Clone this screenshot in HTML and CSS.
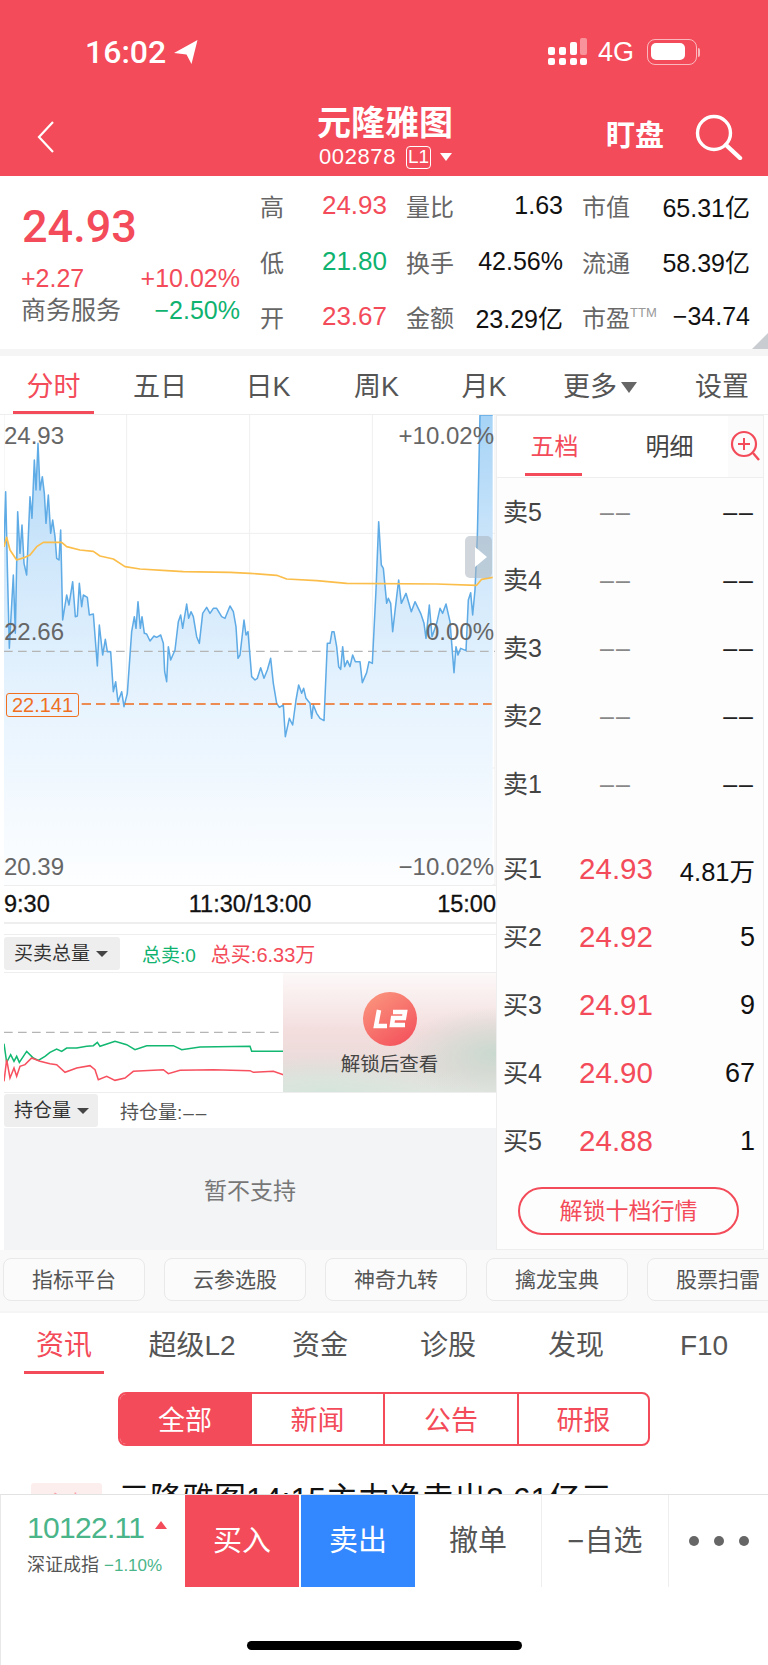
FILE: index.html
```html
<!DOCTYPE html>
<html lang="zh-CN">
<head>
    <meta charset="UTF-8">
    <meta name="viewport" content="width=device-width, initial-scale=1.0">
    <title>元隆雅图 002878</title>
    <link rel="stylesheet" href="styles.css">
</head>
<body>
<div class="page">
    <header class="header">
        <div class="status">
            <span class="clock">16:02</span>
            <svg class="loc" width="24" height="24" viewBox="0 0 24 24"><path d="M23.5 0 L0 13 L12.5 14.5 L17.5 24 Z" fill="#fff"/></svg>
            <span class="status-right">
                <svg class="signal" width="39" height="27" viewBox="0 0 39 27">
                    <g fill="#fff">
                        <rect x="0" y="20" width="7" height="7" rx="2"/><rect x="11" y="20" width="7" height="7" rx="2"/><rect x="22" y="20" width="7" height="7" rx="2"/><rect x="32" y="20" width="7" height="7" rx="2"/>
                        <rect x="0" y="9" width="7" height="8" rx="2"/><rect x="11" y="9" width="7" height="8" rx="2"/><rect x="22" y="4" width="7" height="13" rx="2"/>
                        <rect x="32" y="0" width="7" height="17" rx="2" opacity=".4"/>
                    </g>
                </svg>
                <span class="net">4G</span>
                <span class="battery"><span class="battery-fill"></span></span>
                <span class="battery-tip"></span>
            </span>
        </div>
        <div class="nav">
            <svg class="back" width="18" height="32" viewBox="0 0 18 32"><path d="M16 1 L2 16 L16 31" fill="none" stroke="#fff" stroke-width="2.2"/></svg>
            <div class="title">
                <div class="name">元隆雅图</div>
                <div class="code">002878<span class="level">L1</span><span class="caret-white"></span></div>
            </div>
            <span class="watch">盯盘</span>
            <svg class="search" width="48" height="46" viewBox="0 0 48 46"><circle cx="19" cy="19" r="16.5" fill="none" stroke="#fff" stroke-width="3.4"/><path d="M31 31 L45 44" stroke="#fff" stroke-width="4.4" stroke-linecap="round"/></svg>
        </div>
    </header>

    <section class="quote">
        <div class="quote-left">
            <div class="price">24.93</div>
            <div class="quote-line"><span class="red">+2.27</span><span class="red">+10.02%</span></div>
            <div class="quote-line line-two"><span class="muted">商务服务</span><span class="green">−2.50%</span></div>
        </div>
        <div class="stats">
            <div class="stat"><span class="muted">高</span><span class="red">24.93</span></div>
            <div class="stat"><span class="muted">量比</span><span>1.63</span></div>
            <div class="stat"><span class="muted">市值</span><span>65.31亿</span></div>
            <div class="stat"><span class="muted">低</span><span class="green">21.80</span></div>
            <div class="stat"><span class="muted">换手</span><span>42.56%</span></div>
            <div class="stat"><span class="muted">流通</span><span>58.39亿</span></div>
            <div class="stat"><span class="muted">开</span><span class="red">23.67</span></div>
            <div class="stat"><span class="muted">金额</span><span>23.29亿</span></div>
            <div class="stat"><span class="muted">市盈<sup class="ttm">TTM</sup></span><span>−34.74</span></div>
        </div>
        <span class="corner"></span>
    </section>

    <nav class="chart-tabs">
        <span class="chart-tab active">分时</span>
        <span class="chart-tab">五日</span>
        <span class="chart-tab">日K</span>
        <span class="chart-tab">周K</span>
        <span class="chart-tab">月K</span>
        <span class="chart-tab more-tab">更多<i class="caret-gray"></i></span>
        <span class="chart-tab last">设置</span>
    </nav>

    <div class="main">
        <div class="left">
            <div class="chart">
                <svg width="492" height="470" viewBox="12 195 1476 1410">
                    <defs>
                        <linearGradient id="area" x1="0" y1="0" x2="0" y2="1">
                            <stop offset="0" stop-color="#a6d3f6"/>
                            <stop offset=".3" stop-color="#cfe7fb"/>
                            <stop offset=".6" stop-color="#e6f3fe"/>
                            <stop offset="1" stop-color="#fdfeff"/>
                        </linearGradient>
                    </defs>
                    <g stroke="#efefef" stroke-width="3" fill="none">
                        <path d="M12 195 V1605 M380 195 V1605 M749 195 V1605 M1117 195 V1605 M1485 195 V1605"/>
                        <path d="M12 550 H1485 M12 1254 H1485 M12 1603 H1485"/>
                    </g>
                    <polygon fill="url(#area)" points="12,590 17,425 22,650 28,895 33,800 40,675 46,850 53,485 60,610 66,525 72,640 80,675 90,440 96,505 103,330 108,420 114,280 120,420 127,380 133,430 138,520 145,435 152,550 158,510 165,560 170,625 177,630 182,540 188,810 200,735 207,765 218,695 226,800 232,798 238,700 245,770 250,735 262,742 268,795 280,792 292,948 298,825 308,915 316,868 322,905 332,905 340,1025 347,995 354,1055 365,1025 372,1070 382,1030 395,845 403,800 408,835 414,755 421,835 426,800 433,850 440,852 450,873 462,858 470,862 482,855 490,880 494,965 500,995 505,890 512,930 525,900 535,815 542,795 548,835 560,762 566,805 573,785 580,800 590,860 598,880 608,790 620,772 630,790 640,775 650,775 665,800 675,805 690,768 700,785 708,830 714,925 720,915 732,810 738,855 744,845 755,980 765,990 772,985 782,953 792,985 802,960 812,925 820,1000 830,1060 838,1072 850,1065 856,1160 868,1105 878,1125 888,1050 896,1005 905,1030 911,1015 918,1045 930,1060 935,1105 940,1065 950,1090 960,1105 972,1112 982,880 990,880 996,845 1002,845 1010,890 1016,950 1022,958 1028,890 1034,950 1042,932 1050,950 1058,915 1066,935 1080,935 1087,998 1100,968 1107,935 1117,940 1128,720 1136,515 1144,645 1150,655 1160,760 1165,745 1172,760 1178,845 1190,740 1196,690 1204,760 1218,730 1234,785 1245,755 1262,790 1272,820 1278,865 1288,765 1296,860 1310,820 1320,775 1328,790 1338,762 1350,815 1362,968 1368,890 1374,915 1382,895 1398,902 1405,750 1412,728 1418,795 1425,720 1432,560 1440,195 1478,195 1478,1605 12,1605"/>
                    <path d="M12 904 H1485" stroke="#b5b5b5" stroke-width="3.4" stroke-dasharray="26 16" fill="none"/>
                    <polyline fill="none" stroke="#5fabe6" stroke-width="4.6" stroke-linejoin="round" points="12,590 17,425 22,650 28,895 33,800 40,675 46,850 53,485 60,610 66,525 72,640 80,675 90,440 96,505 103,330 108,420 114,280 120,420 127,380 133,430 138,520 145,435 152,550 158,510 165,560 170,625 177,630 182,540 188,810 200,735 207,765 218,695 226,800 232,798 238,700 245,770 250,735 262,742 268,795 280,792 292,948 298,825 308,915 316,868 322,905 332,905 340,1025 347,995 354,1055 365,1025 372,1070 382,1030 395,845 403,800 408,835 414,755 421,835 426,800 433,850 440,852 450,873 462,858 470,862 482,855 490,880 494,965 500,995 505,890 512,930 525,900 535,815 542,795 548,835 560,762 566,805 573,785 580,800 590,860 598,880 608,790 620,772 630,790 640,775 650,775 665,800 675,805 690,768 700,785 708,830 714,925 720,915 732,810 738,855 744,845 755,980 765,990 772,985 782,953 792,985 802,960 812,925 820,1000 830,1060 838,1072 850,1065 856,1160 868,1105 878,1125 888,1050 896,1005 905,1030 911,1015 918,1045 930,1060 935,1105 940,1065 950,1090 960,1105 972,1112 982,880 990,880 996,845 1002,845 1010,890 1016,950 1022,958 1028,890 1034,950 1042,932 1050,950 1058,915 1066,935 1080,935 1087,998 1100,968 1107,935 1117,940 1128,720 1136,515 1144,645 1150,655 1160,760 1165,745 1172,760 1178,845 1190,740 1196,690 1204,760 1218,730 1234,785 1245,755 1262,790 1272,820 1278,865 1288,765 1296,860 1310,820 1320,775 1328,790 1338,762 1350,815 1362,968 1368,890 1374,915 1382,895 1398,902 1405,750 1412,728 1418,795 1425,720 1432,560 1440,195 1478,195"/>
                    <path d="M245 1062 H1475" stroke="#ee6a1a" stroke-width="4.4" stroke-dasharray="28 15" fill="none"/>
                    <polyline fill="none" stroke="#fbbe4b" stroke-width="5" stroke-linejoin="round" points="12,590 20,562 30,600 50,630 75,622 90,615 110,590 130,577 185,577 200,590 240,600 280,604 300,618 340,627 375,650 420,657 500,662 550,665 690,667 750,670 830,676 860,687 950,692 1040,700 1310,702 1430,706 1445,688 1478,682"/>
                </svg>
                <span class="lbl lbl-tl">24.93</span>
                <span class="lbl lbl-tr">+10.02%</span>
                <span class="lbl lbl-ml">22.66</span>
                <span class="lbl lbl-mr">0.00%</span>
                <span class="lbl lbl-bl">20.39</span>
                <span class="lbl lbl-br">−10.02%</span>
                <span class="cost">22.141</span>
                <span class="handle"><i class="handle-arrow"></i></span>
            </div>
            <div class="axis"><span>9:30</span><span>11:30/13:00</span><span class="axis-end">15:00</span></div>
            <div class="sub-head sub-first">
                <span class="pick pick-wide">买卖总量<i class="caret-dark"></i></span>
                <span class="green sell-total">总卖:0</span>
                <span class="red">总买:6.33万</span>
            </div>
            <div class="mini">
                <svg width="492" height="119" viewBox="12 700 1476 357">
                    <path d="M12 878 H850" stroke="#b5b5b5" stroke-width="3.4" stroke-dasharray="26 16" fill="none"/>
                    <polyline fill="none" stroke="#12b871" stroke-width="4.6" points="12,912 20,968 32,945 42,965 50,950 58,968 80,935 100,955 115,962 135,950 150,938 170,928 185,935 200,925 230,925 260,920 280,918 292,908 300,920 345,905 380,915 405,930 440,918 520,918 545,930 600,922 750,920 755,935 850,935"/>
                    <polyline fill="none" stroke="#f7505f" stroke-width="4.6" points="12,1025 20,960 30,1015 42,985 50,1010 60,980 75,975 95,955 120,965 150,972 170,975 195,998 230,985 270,978 285,990 295,1020 320,1010 345,1022 375,1015 400,995 490,990 505,1002 540,992 640,990 750,993 760,998 820,995 850,1005"/>
                </svg>
                <div class="locked">
                    <span class="l2"><svg width="36" height="22" viewBox="0 0 36 22"><g fill="none" stroke="#fff" stroke-width="4.5"><path d="M7 2 L4 18 H15"/><path d="M21 4 H33 L32 10 H21 L20 17 H33"/></g></svg></span>
                    <span class="locked-text">解锁后查看</span>
                </div>
            </div>
            <div class="sub-head sub-second">
                <span class="pick">持仓量<i class="caret-dark"></i></span>
                <span class="hold">持仓量:<span class="short">––</span></span>
            </div>
            <div class="empty">暂不支持</div>
        </div>

        <aside class="panel">
            <div class="panel-tabs">
                <span class="panel-tab active">五档</span>
                <span class="panel-tab">明细</span>
                <span class="panel-zoom">
                    <svg width="30" height="32" viewBox="0 0 30 32"><circle cx="14" cy="14" r="12" fill="none" stroke="#f34b59" stroke-width="2.2"/><path d="M14 8 V20 M8 14 H20" stroke="#f34b59" stroke-width="2"/><path d="M23 23 L29 30" stroke="#f34b59" stroke-width="2.4"/></svg>
                </span>
            </div>
            <div class="book">
                <div class="row"><span class="side">卖5</span><span class="dash">––</span><span class="dash-dark">––</span></div>
                <div class="row"><span class="side">卖4</span><span class="dash">––</span><span class="dash-dark">––</span></div>
                <div class="row"><span class="side">卖3</span><span class="dash">––</span><span class="dash-dark">––</span></div>
                <div class="row"><span class="side">卖2</span><span class="dash">––</span><span class="dash-dark">––</span></div>
                <div class="row"><span class="side">卖1</span><span class="dash">––</span><span class="dash-dark">––</span></div>
            </div>
            <div class="book book-buy">
                <div class="row"><span class="side">买1</span><span class="bid">24.93</span><span class="vol vol-small">4.81万</span></div>
                <div class="row"><span class="side">买2</span><span class="bid">24.92</span><span class="vol">5</span></div>
                <div class="row"><span class="side">买3</span><span class="bid">24.91</span><span class="vol">9</span></div>
                <div class="row"><span class="side">买4</span><span class="bid">24.90</span><span class="vol">67</span></div>
                <div class="row"><span class="side">买5</span><span class="bid">24.88</span><span class="vol">1</span></div>
            </div>
            <div class="unlock">解锁十档行情</div>
        </aside>
    </div>

    <div class="shortcuts">
        <span class="shortcut">指标平台</span>
        <span class="shortcut">云参选股</span>
        <span class="shortcut">神奇九转</span>
        <span class="shortcut">擒龙宝典</span>
        <span class="shortcut">股票扫雷</span>
    </div>

    <section class="news">
        <div class="news-tabs">
            <span class="news-tab active">资讯</span>
            <span class="news-tab">超级L2</span>
            <span class="news-tab">资金</span>
            <span class="news-tab">诊股</span>
            <span class="news-tab">发现</span>
            <span class="news-tab">F10</span>
        </div>
        <div class="segments">
            <span class="segment on">全部</span>
            <span class="segment">新闻</span>
            <span class="segment">公告</span>
            <span class="segment">研报</span>
        </div>
        <div class="news-item">
            <span class="news-tag">主力</span>
            <span class="news-title">元隆雅图14:15主力净卖出2.61亿元</span>
        </div>
    </section>

    <footer class="bar">
        <div class="bar-row">
            <div class="index">
                <div class="index-top"><span class="index-val">10122.11</span><i class="index-up"></i></div>
                <div class="index-sub">深证成指 <span class="index-pct">−1.10%</span></div>
            </div>
            <span class="action buy">买入</span>
            <span class="action sell">卖出</span>
            <span class="action cancel">撤单</span>
            <span class="action fav">−自选</span>
            <span class="action more"><i></i><i></i><i></i></span>
        </div>
        <div class="home"></div>
    </footer>
</div>
</body>
</html>
```

FILE: styles.css
```css
* {
    box-sizing: border-box;
}

body {
    margin: 0;
    font-family: "Liberation Sans", "Noto Sans CJK SC", sans-serif;
    color: #111;
    background-color: #fff;
}

i {
    font-style: normal;
}

.page {
    width: 768px;
    height: 1665px;
    overflow: hidden;
    display: flex;
    flex-direction: column;
    background-color: #f5f5f5;
}

.red { color: #f34b59; }
.green { color: #0fb26f; }
.muted { color: #666; }

/* header */
.header {
    height: 176px;
    flex: none;
    background-color: #f34b59;
    color: #fff;
}

.status {
    height: 92px;
    padding: 34px 68px 0 85px;
    display: flex;
    align-items: flex-start;
}

.clock {
    font-size: 32px;
    line-height: 36px;
    font-family: Roboto, "Liberation Sans", sans-serif;
    font-weight: 500;
}

.loc {
    margin: 6px 0 0 8px;
}

.status-right {
    margin-left: auto;
    display: flex;
    align-items: center;
    height: 36px;
}

.signal {
    margin-top: -1px;
}

.net {
    font-size: 27px;
    margin-left: 11px;
    width: 49px;
}

.battery {
    width: 50px;
    height: 26px;
    border: 1.5px solid rgba(255, 255, 255, .6);
    border-radius: 8px;
    padding: 3px;
    display: block;
}

.battery-fill {
    display: block;
    width: 34px;
    height: 17px;
    background-color: #fff;
    border-radius: 5px;
}

.battery-tip {
    width: 2px;
    height: 9px;
    margin-left: 1px;
    background-color: rgba(255, 255, 255, .6);
    border-radius: 0 2px 2px 0;
}

.nav {
    height: 84px;
    display: flex;
    align-items: flex-start;
}

.back {
    margin: 29px 0 0 37px;
}

.title {
    width: 135px;
    margin: 12px 0 0 262px;
}

.name {
    font-size: 34px;
    line-height: 38px;
    font-weight: bold;
    white-space: nowrap;
}

.code {
    margin-top: 3px;
    padding-left: 2px;
    font-size: 22px;
    line-height: 24px;
    letter-spacing: .6px;
    white-space: nowrap;
    display: flex;
    align-items: center;
}

.level {
    width: 26px;
    height: 23px;
    margin-left: 10px;
    border: 1.5px solid #fff;
    border-radius: 4px;
    font-size: 19px;
    line-height: 20px;
    letter-spacing: 0;
    text-align: center;
}

.caret-white {
    margin-left: 9px;
    border: 6px solid transparent;
    border-top: 8px solid #fff;
    border-bottom: 0;
}

.watch {
    margin: 27px 0 0 154px;
    font-size: 29px;
    line-height: 34px;
    font-weight: bold;
    white-space: nowrap;
}

.search {
    margin: 22px 0 0 31px;
}

/* quote */
.quote {
    height: 173px;
    flex: none;
    background-color: #fff;
    display: flex;
    position: relative;
}

.quote-left {
    width: 219px;
    margin-left: 21px;
    margin-right: 20px;
}

.price {
    font-family: Roboto, "Liberation Sans", sans-serif;
    font-weight: 500;
    font-size: 45px;
    line-height: 50px;
    color: #f34b59;
    margin: 26px 0 0 1px;
}

.quote-line {
    display: flex;
    justify-content: space-between;
    font-size: 25px;
    line-height: 30px;
    margin-top: 11px;
    white-space: nowrap;
}

.line-two {
    margin-top: 2px;
}

.stats {
    padding-top: 2px;
    display: grid;
    grid-template-columns: 127px 157px 168px;
    grid-auto-rows: 55.5px;
    column-gap: 19px;
    font-size: 25px;
}

.stat {
    display: flex;
    justify-content: space-between;
    align-items: center;
    white-space: nowrap;
}

.stat .red,
.stat .green {
    font-size: 26px;
}

.stat .muted {
    font-size: 24px;
}

.ttm {
    font-size: 13px;
    line-height: 0;
    vertical-align: 10px;
    color: #999;
}

.corner {
    position: absolute;
    right: 0;
    bottom: 0;
    width: 16px;
    height: 16px;
    background-color: #c9ccd0;
    clip-path: polygon(100% 0, 100% 100%, 0 100%);
}

/* chart tabs */
.chart-tabs {
    height: 59px;
    flex: none;
    margin-top: 7px;
    background-color: #fff;
    border-bottom: 1px solid #eee;
    display: grid;
    grid-template-columns: 107px 106px 110px 107px 108px 108px 1fr;
    font-size: 27px;
    color: #555;
}

.chart-tab {
    text-align: center;
    line-height: 62px;
    height: 58px;
    white-space: nowrap;
}

.chart-tab.active {
    color: #f34b59;
    position: relative;
}

.chart-tab.active::after {
    content: "";
    position: absolute;
    left: 13px;
    right: 13px;
    bottom: 0;
    height: 3px;
    background-color: #f34b59;
}

.chart-tab.more-tab {
    text-align: left;
    padding-left: 25px;
}

.chart-tab.last {
    text-align: right;
    padding-right: 19px;
}

.caret-gray {
    display: inline-block;
    vertical-align: 3px;
    margin-left: 4px;
    border: 8px solid transparent;
    border-top: 11px solid #666;
    border-bottom: 0;
}

/* main split */
.main {
    height: 835px;
    flex: none;
    display: flex;
    background-color: #fff;
}

.left {
    width: 492px;
    margin-left: 4px;
    flex: none;
}

.chart {
    height: 470px;
    position: relative;
    overflow: hidden;
}

.chart svg,
.mini svg {
    display: block;
}

.lbl {
    position: absolute;
    font-size: 24px;
    line-height: 28px;
    color: #666;
}

.lbl-tl { left: 0; top: 7px; }
.lbl-tr { right: 2px; top: 7px; }
.lbl-ml { left: 0; top: 203px; }
.lbl-mr { right: 2px; top: 203px; }
.lbl-bl { left: 0; top: 438px; }
.lbl-br { right: 2px; top: 438px; }

.cost {
    position: absolute;
    left: 2px;
    top: 278px;
    width: 73px;
    height: 24px;
    border: 1px solid #f0701f;
    border-radius: 3px;
    color: #f0701f;
    font-size: 20px;
    line-height: 22px;
    text-align: center;
}

.handle {
    position: absolute;
    left: 461px;
    top: 121px;
    width: 27px;
    height: 42px;
    border-radius: 5px;
    background-color: rgba(170, 180, 190, .55);
    display: flex;
    align-items: center;
    justify-content: center;
}

.handle-arrow {
    margin-left: 4px;
    border: 10px solid transparent;
    border-left: 12px solid #fff;
    border-right: 0;
}

.axis {
    height: 39px;
    border-top: 1px solid #eee;
    border-bottom: 2px solid #eee;
    display: grid;
    grid-template-columns: 1fr auto 1fr;
    align-items: center;
    font-size: 23.5px;
    color: #111;
    -webkit-text-stroke: .3px #111;
}

.axis-end {
    text-align: right;
}

.sub-head {
    height: 39px;
    display: flex;
    align-items: center;
    font-size: 19px;
    white-space: nowrap;
}

.sub-first {
    margin-top: 10px;
    border-top: 1px solid #eee;
    border-bottom: 1px solid #eee;
}

.sub-first .red {
    font-size: 20px;
}

.sub-second {
    height: 36px;
    border-top: 1px solid #eee;
}

.pick {
    width: 94px;
    height: 33px;
    background-color: #eee;
    border-radius: 3px;
    color: #333;
    padding-left: 10px;
    line-height: 33px;
}

.pick-wide {
    width: 116px;
}

.caret-dark {
    display: inline-block;
    vertical-align: 3px;
    margin-left: 6px;
    border: 6px solid transparent;
    border-top: 6px solid #444;
    border-bottom: 0;
}

.sell-total {
    margin-left: 22px;
    margin-right: 15px;
}

.hold {
    margin-left: 22px;
    color: #555;
}

.short {
    letter-spacing: 2px;
    margin-left: 1px;
}

.mini {
    height: 119px;
    position: relative;
}

.locked {
    position: absolute;
    left: 279px;
    right: 0;
    top: 0;
    bottom: 0;
    background:
        radial-gradient(ellipse 45% 40% at 100% 68%, #c9d9cf 0%, rgba(201, 217, 207, 0) 100%),
        radial-gradient(ellipse 70% 30% at 20% 100%, #d5e5dc 0%, rgba(213, 229, 220, 0) 100%),
        linear-gradient(180deg, #fdf9f9 0%, #f3dddd 50%, #e8dcda 80%, #e4e6e2 100%);
    display: flex;
    flex-direction: column;
    align-items: center;
}

.l2 {
    width: 54px;
    height: 54px;
    margin-top: 19px;
    border-radius: 50%;
    background: linear-gradient(145deg, #fb9a80, #f34b59);
    display: flex;
    align-items: center;
    justify-content: center;
}

.locked-text {
    margin-top: 5px;
    font-size: 19.5px;
    line-height: 26px;
    color: #444;
}

.empty {
    height: 122px;
    background-color: #f3f4f6;
    text-align: center;
    line-height: 126px;
    font-size: 23px;
    color: #777;
}

/* order book */
.panel {
    width: 268px;
    flex: none;
    background-color: #fdfdfd;
    border: 1px solid #eee;
}

.panel-tabs {
    height: 62px;
    border-bottom: 1px solid #eee;
    display: flex;
    background-color: #fff;
}

.panel-tab {
    width: 115px;
    text-align: center;
    font-size: 24px;
    line-height: 62px;
    color: #444;
    position: relative;
}

.panel-tab.active {
    color: #f34b59;
}

.panel-tab.active::after {
    content: "";
    position: absolute;
    left: 28px;
    width: 57px;
    bottom: 1px;
    height: 3px;
    background-color: #f34b59;
}

.panel-zoom {
    flex: 1;
    background-color: #fbfbfb;
    padding: 14px 0 0 2px;
    margin-left: 1px;
}

.book-buy {
    margin-top: 17px;
}

.row {
    height: 68px;
    padding: 0 8px 0 6px;
    display: grid;
    grid-template-columns: 70px 86px 1fr;
    align-items: center;
    font-size: 25px;
    color: #444;
}

.side {
    padding-bottom: 5px;
}

.dash,
.dash-dark {
    letter-spacing: 2px;
    font-size: 25px;
    white-space: nowrap;
}

.dash {
    color: #888;
    text-align: center;
}

.dash-dark {
    color: #222;
    text-align: right;
}

.bid {
    color: #f34b59;
    font-size: 29.5px;
    text-align: center;
}

.vol {
    color: #111;
    font-size: 27px;
    text-align: right;
}

.vol-small {
    font-size: 25.5px;
    white-space: nowrap;
}

.unlock {
    width: 221px;
    height: 48px;
    margin: 12px 0 0 21px;
    border: 2px solid #f34b59;
    border-radius: 24px;
    color: #f34b59;
    text-align: center;
    line-height: 44px;
    font-size: 23px;
}

/* shortcuts */
.shortcuts {
    height: 61px;
    flex: none;
    padding: 8px 0 0 3px;
    display: flex;
    gap: 19px;
    background-color: #f9f9f9;
    overflow: hidden;
}

.shortcut {
    width: 142px;
    height: 43px;
    flex: none;
    background-color: #fbfbfb;
    border: 1px solid #e9e9e9;
    border-radius: 8px;
    text-align: center;
    line-height: 41px;
    font-size: 21px;
    color: #555;
}

/* news */
.news {
    height: 181px;
    flex: none;
    margin-top: 2px;
    background-color: #fff;
    overflow: hidden;
}

.news-tabs {
    height: 60px;
    display: grid;
    grid-template-columns: repeat(6, 128px);
    font-size: 28px;
    color: #555;
}

.news-tab {
    text-align: center;
    line-height: 66px;
    position: relative;
}

.news-tab.active {
    color: #f34b59;
}

.news-tab.active::after {
    content: "";
    position: absolute;
    left: 24px;
    width: 80px;
    top: 58px;
    height: 3px;
    background-color: #f34b59;
}

.segments {
    width: 532px;
    height: 54px;
    margin: 19px 0 0 118px;
    border: 2px solid #f34b59;
    border-radius: 8px;
    display: grid;
    grid-template-columns: 130px 133px 134px 1fr;
    overflow: hidden;
}

.segment {
    text-align: center;
    line-height: 54px;
    font-size: 27px;
    color: #f34b59;
    border-left: 2px solid #f34b59;
}

.segment.on {
    background-color: #f34b59;
    color: #fff;
    border-left: 0;
}

.news-item {
    margin-top: 37px;
    padding-left: 31px;
    display: flex;
    align-items: flex-start;
}

.news-tag {
    width: 71px;
    height: 40px;
    background-color: #fdeeee;
    color: #f9a3aa;
    border-radius: 3px;
    text-align: center;
    font-size: 20px;
    line-height: 40px;
}

.news-title {
    margin-left: 16px;
    font-size: 32px;
    line-height: 36px;
    white-space: nowrap;
    margin-top: -2px;
}

/* bottom bar */
.bar {
    flex: 1;
    background-color: #fff;
    border-top: 1px solid #e2e2e2;
    border-left: 1px solid #e8e8e8;
}

.bar-row {
    height: 92px;
    display: flex;
}

.index {
    width: 184px;
    padding: 14px 0 0 26px;
    white-space: nowrap;
}

.index-top {
    display: flex;
    align-items: flex-start;
    height: 38px;
}

.index-val {
    font-size: 30px;
    line-height: 38px;
    color: #4bb58a;
    letter-spacing: -.7px;
}

.index-up {
    margin: 12px 0 0 11px;
    border: 6px solid transparent;
    border-bottom: 8px solid #f34b59;
    border-top: 0;
}

.index-sub {
    margin-top: 6px;
    font-size: 18px;
    line-height: 24px;
    color: #555;
}

.index-pct {
    color: #4bb58a;
    font-size: 17px;
}

.action {
    text-align: center;
    line-height: 92px;
    font-size: 29px;
    color: #555;
}

.buy {
    width: 114px;
    background-color: #f34b59;
    color: #fff;
}

.sell {
    width: 114px;
    margin-left: 2px;
    background-color: #3388ff;
    color: #fff;
}

.cancel {
    width: 127px;
    border-right: 1px solid #eee;
}

.fav {
    width: 127px;
    border-right: 1px solid #eee;
}

.more {
    flex: 1;
    display: flex;
    align-items: center;
    justify-content: center;
    gap: 15px;
}

.more i {
    width: 10px;
    height: 10px;
    border-radius: 50%;
    background-color: #666;
}

.home {
    width: 275px;
    height: 9px;
    margin: 54px 0 0 246px;
    background-color: #000;
    border-radius: 5px;
}
```
